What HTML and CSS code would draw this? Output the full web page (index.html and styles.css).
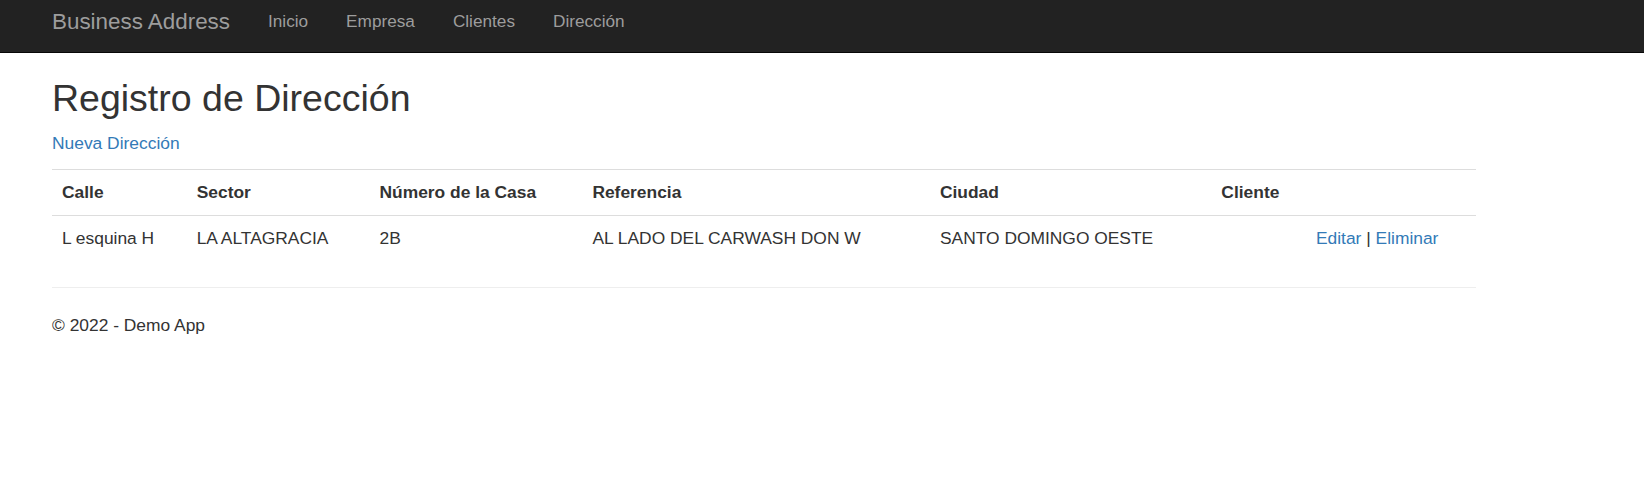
FILE: index.html
```html
<!DOCTYPE html>
<html lang="es">
<head>
<meta charset="utf-8">
<title>Registro de Dirección - Demo App</title>
<link rel="stylesheet" href="styles.css">
</head>
<body>
<header class="navbar">
  <div class="navbar-inner">
    <a class="brand" href="#">Business Address</a>
    <ul class="nav">
      <li><a href="#">Inicio</a></li>
      <li><a href="#">Empresa</a></li>
      <li><a href="#">Clientes</a></li>
      <li><a href="#">Dirección</a></li>
    </ul>
  </div>
</header>
<main class="container">
  <h2 class="title">Registro de Dirección</h2>
  <p class="create"><a href="#">Nueva Dirección</a></p>
  <table class="table">
    <colgroup>
      <col class="c-calle">
      <col class="c-sector">
      <col class="c-numero">
      <col class="c-ref">
      <col class="c-ciudad">
      <col class="c-cliente">
      <col class="c-actions">
    </colgroup>
    <tbody>
      <tr>
        <th>Calle</th>
        <th>Sector</th>
        <th>Número de la Casa</th>
        <th>Referencia</th>
        <th>Ciudad</th>
        <th>Cliente</th>
        <th></th>
      </tr>
      <tr>
        <td>L esquina H</td>
        <td>LA ALTAGRACIA</td>
        <td>2B</td>
        <td>AL LADO DEL CARWASH DON W</td>
        <td>SANTO DOMINGO OESTE</td>
        <td></td>
        <td><a href="#">Editar</a> | <a href="#">Eliminar</a></td>
      </tr>
    </tbody>
  </table>
  <hr class="rule">
  <footer class="footer">
    <p>&copy; 2022 - Demo App</p>
  </footer>
</main>
</body>
</html>
```

FILE: styles.css
```css
* {
  box-sizing: border-box;
}

html, body {
  margin: 0;
  padding: 0;
  background: #fff;
}

body {
  font-family: "Liberation Sans", Arial, Helvetica, sans-serif;
  font-size: 17.4px;
  line-height: 24px;
  color: #333;
}

a {
  color: #337ab7;
  text-decoration: none;
}

.navbar {
  background: #222;
  border-bottom: 1px solid #080808;
  height: 53px;
}

.navbar-inner {
  display: flex;
  align-items: flex-start;
  padding-left: 34px;
}

.brand {
  font-size: 22.4px;
  line-height: 24px;
  color: #9d9d9d;
  padding: 9.5px 19px 0 18px;
}

.nav {
  display: flex;
  list-style: none;
  margin: 0;
  padding: 0;
}

.nav a {
  display: block;
  color: #9d9d9d;
  font-size: 17.2px;
  line-height: 24px;
  padding: 8.5px 19px 0 19px;
}

.container {
  width: 1476px;
  padding: 0 0 0 52px;
}

.title {
  font-family: "Liberation Sans", Arial, Helvetica, sans-serif;
  font-weight: 400;
  font-size: 37.5px;
  line-height: 1.1;
  color: #333;
  margin: 25px 0 12px;
}

.create {
  margin: 0 0 14px;
}

.table {
  width: 100%;
  table-layout: fixed;
  border-collapse: collapse;
  border-spacing: 0;
  margin: 0 0 26px;
}

.table th,
.table td {
  padding: 10px 10px;
  line-height: 25px;
  border-top: 1px solid #ddd;
  text-align: left;
  white-space: nowrap;
}

.table th {
  font-weight: 700;
  vertical-align: bottom;
}

.table td {
  vertical-align: top;
}

.c-calle { width: 134.7px; }
.c-sector { width: 182.8px; }
.c-numero { width: 212.9px; }
.c-ref { width: 347.6px; }
.c-ciudad { width: 281.4px; }
.c-cliente { width: 94.6px; }
.c-actions { width: 170px; }

.rule {
  border: 0;
  border-top: 1px solid #eee;
  height: 0;
  margin: 0 0 25px;
}

.footer p {
  margin: 0 0 12px;
}
```
